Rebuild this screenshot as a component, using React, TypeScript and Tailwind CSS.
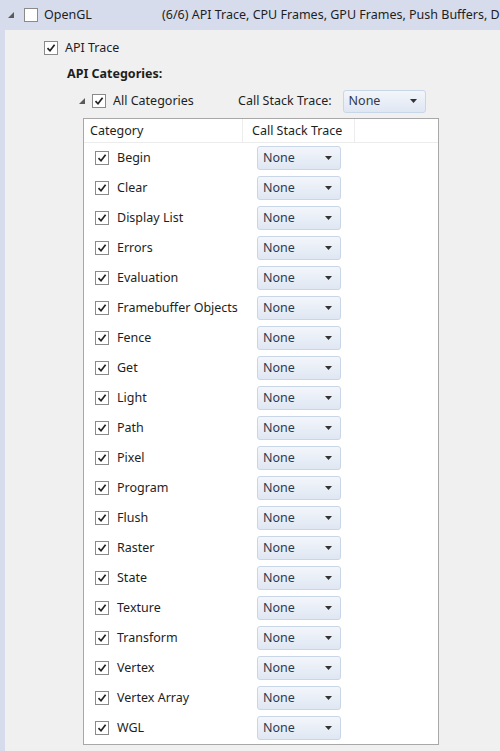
import React from "react";

const categories = [
  "Begin", "Clear", "Display List", "Errors", "Evaluation", "Framebuffer Objects",
  "Fence", "Get", "Light", "Path", "Pixel", "Program", "Flush", "Raster", "State",
  "Texture", "Transform", "Vertex", "Vertex Array", "WGL",
];

const Expander = () => (
  <svg width="6" height="6" viewBox="0 0 6 6" className="shrink-0">
    <polygon points="6,0 6,6 0,6" fill="#5a5a5a" />
  </svg>
);

const Check = ({ checked = true }: { checked?: boolean }) => (
  <div className="w-[14px] h-[14px] shrink-0 border border-[#8a8a8a] bg-white flex items-center justify-center">
    {checked && (
      <svg width="10" height="10" viewBox="0 0 10 10">
        <path d="M1.5 5.2 L4 7.8 L8.6 1.8" fill="none" stroke="#222" strokeWidth="1.7" />
      </svg>
    )}
  </div>
);

const Dropdown = ({ w, h }: { w: string; h: string }) => (
  <div className={`${w} ${h} flex items-center justify-between pl-[5px] pr-[8px] rounded-[3px] border border-[#c9d6e8] bg-gradient-to-b from-[#f3f6fb] to-[#dfe7f3] text-[#2f3a4a]`}>
    <span>None</span>
    <svg width="7" height="4" viewBox="0 0 7 4">
      <polygon points="0,0 7,0 3.5,4" fill="#333" />
    </svg>
  </div>
);

export default function App() {
  return (
    <div className="w-[500px] h-[751px] overflow-hidden bg-[#f0f0f0] text-[12.5px] text-[#1e1e1e]" style={{ fontFamily: '"Noto Sans", "Open Sans", sans-serif' }}>
      {/* header */}
      <div className="h-[30px] bg-[#d6dcec] flex items-center whitespace-nowrap">
        <div className="ml-[8px]"><Expander /></div>
        <div className="ml-[10px]"><Check checked={false} /></div>
        <span className="ml-[6px] w-[118px] shrink-0">OpenGL</span>
        <span className="shrink-0">(6/6) API Trace, CPU Frames, GPU Frames, Push Buffers, Device</span>
      </div>

      <div className="flex h-full">
        <div className="w-[5px] bg-[#d6dcec] shrink-0" />
        <div className="flex-1">
          <div className="flex items-center mt-[11px] ml-[39px] h-[14px]">
            <Check />
            <span className="ml-[7px]">API Trace</span>
          </div>

          <div className="font-bold ml-[62px] mt-[11px] leading-[16px]">API Categories:</div>

          <div className="flex items-center ml-[74px] mt-[7px] h-[24px]">
            <Expander />
            <div className="ml-[7px]"><Check /></div>
            <span className="ml-[7px] w-[125px]">All Categories</span>
            <span>Call Stack Trace:</span>
            <div className="ml-[11px]"><Dropdown w="w-[83px]" h="h-[23px]" /></div>
          </div>

          <div className="ml-[78px] mt-[5px] w-[356px] h-[627px] bg-white border border-[#a8a8a8]">
            <div className="flex h-[24px] border-b border-[#ececec]">
              <div className="w-[159px] pl-[6px] pt-[2px] flex items-center border-r border-[#ececec]">Category</div>
              <div className="w-[112px] flex items-center pl-[9px] pt-[2px] border-r border-[#ececec]">Call Stack Trace</div>
            </div>
            {categories.map((c) => (
              <div key={c} className="flex items-center h-[30px]">
                <div className="w-[173px] pl-[11px] flex items-center">
                  <Check />
                  <span className="ml-[8px]">{c}</span>
                </div>
                <Dropdown w="w-[84px]" h="h-[24px]" />
              </div>
            ))}
          </div>
        </div>
      </div>
    </div>
  );
}
